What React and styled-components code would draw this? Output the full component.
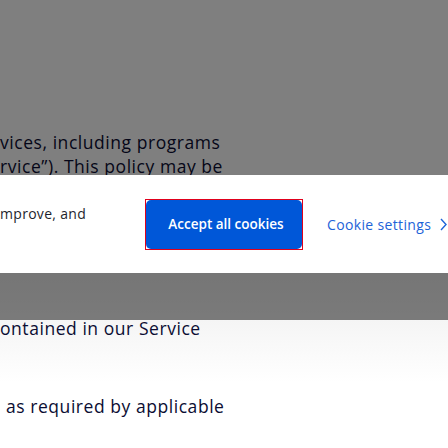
import React from 'react'
import styled, { createGlobalStyle } from 'styled-components'

const Global = createGlobalStyle`
  html, body { margin: 0; padding: 0; }
  body {
    width: 448px;
    height: 448px;
    overflow: hidden;
    font-family: "Open Sans", Lato, sans-serif;
    background: #fff;
  }
`

const Page = styled.div`
  position: relative;
  width: 448px;
  height: 448px;
  overflow: hidden;
  background: #fff;
`

const Article = styled.div`
  display: flex;
  flex-direction: column;
  color: #0b0d33;
  font-size: 17.5px;
  line-height: 24px;
  letter-spacing: 0.55px;
`

const Upper = styled.section`
  height: 273px;
  padding-top: 130px;
  box-sizing: border-box;
  overflow: hidden;
`

const Lower = styled.section`
  height: 175px;
  padding-top: 43px;
  box-sizing: border-box;
  background: linear-gradient(#ececec 0, #f5f5f5 47px, #fff 110px);
`

const Para = styled.p`
  margin: 0 0 ${p => p.$gap || 0}px;
  padding-left: ${p => p.$indent || 0}px;
  white-space: nowrap;
`

const Backdrop = styled.div`
  position: absolute;
  top: 0;
  left: 0;
  right: 0;
  height: 320px;
  background: rgba(0, 0, 0, 0.5);
`

const Banner = styled.div`
  position: absolute;
  top: 175px;
  left: 0;
  right: 0;
  height: 98px;
  background: #fff;
  display: flex;
  align-items: center;
`

const Notice = styled.p`
  flex-shrink: 0;
  align-self: flex-start;
  margin: 29px 0 0;
  width: 145px;
  font-size: 14px;
  line-height: 19px;
  letter-spacing: 0.3px;
  color: #1e1f2e;
  white-space: nowrap;
`

const Focus = styled.div`
  flex-shrink: 0;
  border: 1px solid #e0001b;
  display: flex;
`

const AcceptButton = styled.button`
  width: 156px;
  height: 49px;
  border: none;
  border-radius: 5px;
  background: #0057d8;
  color: #fff;
  font-family: inherit;
  font-size: 13.5px;
  font-weight: 600;
  padding: 0 0 0 4px;
  cursor: pointer;
`

const SettingsLink = styled.a`
  flex-shrink: 0;
  margin-left: 24px;
  display: flex;
  align-items: center;
  gap: 9px;
  color: #1d63d8;
  font-size: 14px;
  letter-spacing: 0.35px;
  white-space: nowrap;
  text-decoration: none;
`

const Chevron = () => (
  <svg width="7" height="13" viewBox="0 0 7 13" fill="none">
    <path d="M1 1l5 5.5L1 12" stroke="#1d63d8" strokeWidth="1.4" />
  </svg>
)

export default function App() {
  return (
    <Page>
      <Global />
      <Article>
        <Upper>
          <Para>vices, including programs</Para>
          <Para>rvice”). This policy may be</Para>
        </Upper>
        <Lower>
          <Para $gap={54}>ontained in our Service</Para>
          <Para $indent={6}>as required by applicable</Para>
        </Lower>
      </Article>
      <Backdrop />
      <Banner>
        <Notice>mprove, and</Notice>
        <Focus>
          <AcceptButton>Accept all cookies</AcceptButton>
        </Focus>
        <SettingsLink href="#">
          Cookie settings
          <Chevron />
        </SettingsLink>
      </Banner>
    </Page>
  )
}
